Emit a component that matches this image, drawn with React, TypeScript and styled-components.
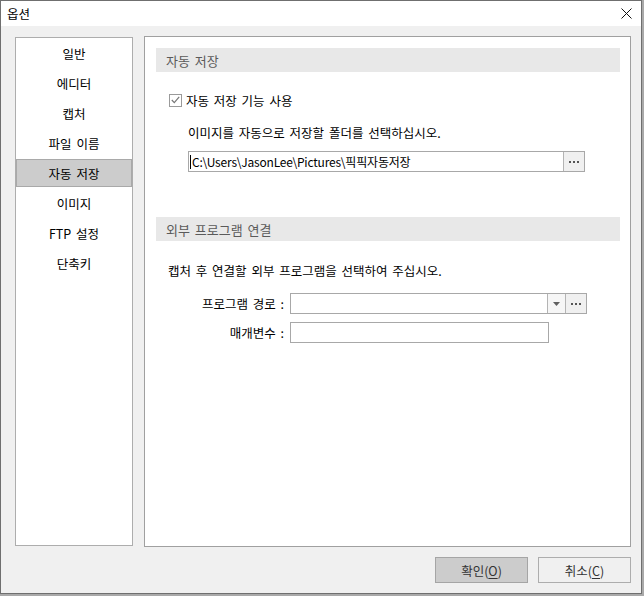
import React, { useState } from "react";
import styled, { createGlobalStyle } from "styled-components";

const GlobalStyle = createGlobalStyle`
  html, body {
    margin: 0;
    padding: 0;
    background-color: #a9a9a9;
  }
  body {
    font-family: "Noto Sans CJK KR", "Noto Sans", sans-serif;
    font-size: 12.5px;
    word-spacing: 2px;
    color: #000;
  }
`;

const Window = styled.div`
  width: 642px;
  height: 594px;
  box-sizing: border-box;
  border: 1px solid #6f6f6f;
  background-color: #f0f0f0;
  display: flex;
  flex-direction: column;
`;

const TitleBar = styled.div`
  height: 25px;
  background-color: #fff;
  display: flex;
  align-items: center;
  justify-content: space-between;
  padding: 0 9px 0 6px;
`;

const Title = styled.span`
  font-size: 12.5px;
`;

const Body = styled.div`
  flex: 1;
  display: flex;
  flex-direction: column;
  padding: 10px 10px 10px 14px;
`;

const Main = styled.div`
  display: flex;
  align-items: flex-start;
  gap: 11px;
`;

const Nav = styled.div`
  width: 118px;
  height: 509px;
  margin-top: 1px;
  box-sizing: border-box;
  border: 1px solid #adadad;
  background-color: #fff;
  padding-top: 1px;
  display: flex;
  flex-direction: column;
  gap: 2px;
`;

const NavItem = styled.div<{ $active?: boolean }>`
  height: 28px;
  box-sizing: border-box;
  display: flex;
  align-items: center;
  justify-content: center;
  border: 1px solid ${p => (p.$active ? "#a9a9a9" : "transparent")};
  background-color: ${p => (p.$active ? "#cccccc" : "transparent")};
  cursor: default;
`;

const Panel = styled.div`
  width: 487px;
  height: 511px;
  box-sizing: border-box;
  border: 1px solid #a0a0a0;
  background-color: #fff;
  padding: 11px 10px 0 11px;
  display: flex;
  flex-direction: column;
`;

const SectionHeader = styled.div<{ $top: number }>`
  height: 24px;
  margin-top: ${p => p.$top}px;
  background-color: #e8e8e8;
  color: #5a5a5a;
  display: flex;
  align-items: center;
  padding-left: 10px;
  font-size: 13px;
`;

const Line = styled.div<{ $top: number; $indent: number }>`
  height: 18px;
  margin-top: ${p => p.$top}px;
  margin-left: ${p => p.$indent}px;
  display: flex;
  align-items: center;
`;

const CheckLabel = styled.label`
  display: flex;
  align-items: center;
  gap: 4px;
  cursor: default;
`;

const CheckBox = styled.span`
  width: 13px;
  height: 13px;
  box-sizing: border-box;
  border: 1px solid #9a9a9a;
  background-color: #fff;
  display: flex;
  align-items: center;
  justify-content: center;
`;

const FieldBox = styled.div<{ $width: number; $top: number; $indent?: number }>`
  width: ${p => p.$width}px;
  height: 21px;
  margin-top: ${p => p.$top}px;
  margin-left: ${p => p.$indent || 0}px;
  box-sizing: border-box;
  border: 1px solid #a8a8a8;
  background-color: #fff;
  display: flex;
`;

const FieldText = styled.div`
  flex: 1;
  display: flex;
  align-items: center;
  padding-left: 1px;
  font-size: 12px;
  letter-spacing: -0.2px;
  word-spacing: 0;
  white-space: nowrap;
  overflow: hidden;
`;

const Caret = styled.span`
  width: 1px;
  height: 14px;
  margin-right: 1px;
  background-color: #000;
`;

const SideButton = styled.div<{ $bg?: string; $width?: number }>`
  width: ${p => p.$width || 20}px;
  border-left: 1px solid #b4b4b4;
  background-color: ${p => p.$bg || "#f0f0f0"};
  display: flex;
  align-items: center;
  justify-content: center;
`;

const FormRow = styled.div<{ $top: number }>`
  display: flex;
  align-items: center;
  gap: 6px;
  margin-top: ${p => p.$top}px;
`;

const FormLabel = styled.div`
  width: 128px;
  text-align: right;
`;

const Footer = styled.div`
  display: flex;
  justify-content: flex-end;
  gap: 10px;
  margin-top: 10px;
`;

const Button = styled.button<{ $primary?: boolean }>`
  width: 93px;
  height: 26px;
  box-sizing: border-box;
  border: 1px solid ${p => (p.$primary ? "#a5a5a5" : "#adadad")};
  background-color: ${p => (p.$primary ? "#cccccc" : "#f0f0f0")};
  color: #333;
  font-family: "Noto Sans CJK KR", "Noto Sans", sans-serif;
  font-size: 12.5px;
  padding: 0;
  outline: none;
  u {
    text-decoration-thickness: 1px;
    text-underline-offset: 2px;
  }
`;

const Dots = () => (
  <svg width="10" height="2" viewBox="0 0 10 2">
    <rect x="0" y="0" width="2" height="2" fill="#555" />
    <rect x="4" y="0" width="2" height="2" fill="#555" />
    <rect x="8" y="0" width="2" height="2" fill="#555" />
  </svg>
);

const DownArrow = () => (
  <svg width="7" height="4" viewBox="0 0 7 4">
    <path d="M0 0 H7 L3.5 4 Z" fill="#606060" />
  </svg>
);

const CloseIcon = () => (
  <svg width="11" height="11" viewBox="0 0 11 11">
    <path d="M0.5 0.5 L10.5 10.5 M10.5 0.5 L0.5 10.5" stroke="#111" strokeWidth="1" />
  </svg>
);

const CheckMark = () => (
  <svg width="9" height="8" viewBox="0 0 9 8">
    <path d="M0.8 4 L3.3 6.7 L8.2 0.8" stroke="#777" strokeWidth="1.2" fill="none" />
  </svg>
);

const menu = ["일반", "에디터", "캡처", "파일 이름", "자동 저장", "이미지", "FTP 설정", "단축키"];

const App: React.FC = () => {
  const [selected, setSelected] = useState("자동 저장");
  const [autoSave, setAutoSave] = useState(true);

  return (
    <>
      <GlobalStyle />
      <Window>
        <TitleBar>
          <Title>옵션</Title>
          <CloseIcon />
        </TitleBar>
        <Body>
          <Main>
            <Nav>
              {menu.map(m => (
                <NavItem key={m} $active={m === selected} onClick={() => setSelected(m)}>
                  {m}
                </NavItem>
              ))}
            </Nav>
            <Panel>
              <SectionHeader $top={0}>자동 저장</SectionHeader>
              <Line $top={19} $indent={13}>
                <CheckLabel onClick={() => setAutoSave(!autoSave)}>
                  <CheckBox>{autoSave && <CheckMark />}</CheckBox>
                  자동 저장 기능 사용
                </CheckLabel>
              </Line>
              <Line $top={14} $indent={32}>
                이미지를 자동으로 저장할 폴더를 선택하십시오.
              </Line>
              <FieldBox $width={397} $top={10} $indent={32}>
                <FieldText>
                  <Caret />
                  C:\Users\JasonLee\Pictures\픽픽자동저장
                </FieldText>
                <SideButton>
                  <Dots />
                </SideButton>
              </FieldBox>

              <SectionHeader $top={45}>외부 프로그램 연결</SectionHeader>
              <Line $top={20} $indent={12}>
                캡처 후 연결할 외부 프로그램을 선택하여 주십시오.
              </Line>
              <FormRow $top={14}>
                <FormLabel>프로그램 경로 :</FormLabel>
                <FieldBox $width={297} $top={0}>
                  <FieldText />
                  <SideButton $bg="#f6f6f6" $width={17}>
                    <DownArrow />
                  </SideButton>
                  <SideButton>
                    <Dots />
                  </SideButton>
                </FieldBox>
              </FormRow>
              <FormRow $top={8}>
                <FormLabel>매개변수 :</FormLabel>
                <FieldBox $width={259} $top={0}>
                  <FieldText />
                </FieldBox>
              </FormRow>
            </Panel>
          </Main>
          <Footer>
            <Button $primary>
              확인(<u>O</u>)
            </Button>
            <Button>
              취소(<u>C</u>)
            </Button>
          </Footer>
        </Body>
      </Window>
    </>
  );
};

export default App;
